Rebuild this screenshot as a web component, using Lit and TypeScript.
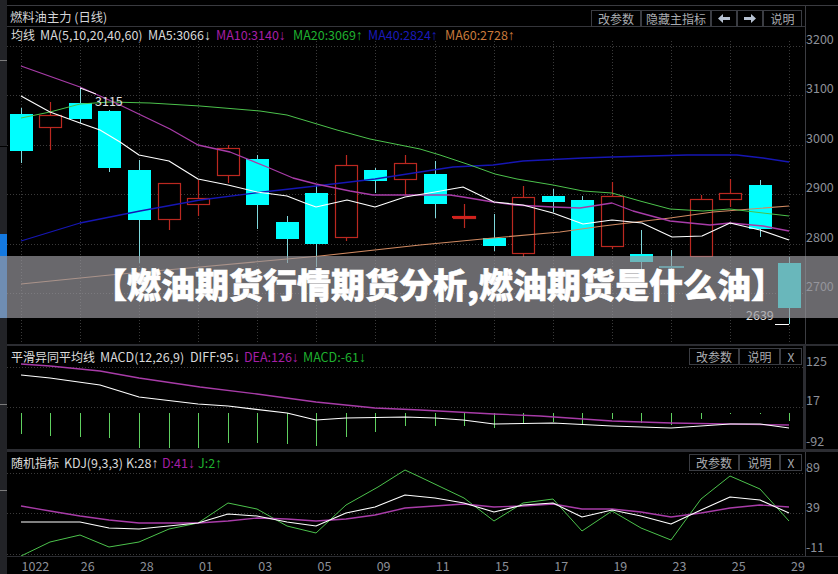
import { LitElement, html, css, svg } from "lit";
import { customElement } from "lit/decorators.js";

type Pt = [number, number];

// x centre, box top, box bottom, wick top, wick bottom, up (red hollow) or down (cyan)
const candles: [number, number, number, number, number, boolean][] = [
  [21.5, 114, 151, 108, 163, false],
  [50.5, 115, 127, 102, 150, true],
  [80.5, 103, 119, 88, 123, false],
  [109.5, 111, 168, 110, 172, false],
  [139.5, 170, 220, 160, 263, false],
  [169.5, 183, 219, 183, 230, true],
  [198.5, 198, 204, 180, 216, true],
  [228.5, 148, 175, 145, 183, true],
  [257.5, 159, 205, 155, 229, false],
  [287.5, 222, 239, 216, 263, false],
  [316.5, 193, 244, 185, 267, false],
  [346.5, 165, 237, 155, 241, true],
  [375.5, 170, 181, 168, 193, false],
  [405.5, 163, 179, 155, 195, true],
  [435.5, 174, 204, 161, 218, false],
  [464.5, 216, 218, 204, 228, true],
  [494.5, 238, 246, 214, 251, false],
  [523.5, 197, 253, 186, 257, true],
  [553.5, 196, 202, 189, 212, false],
  [582.5, 200, 256, 196, 256, false],
  [612.5, 196, 246, 182, 249, true],
  [641.5, 254, 262, 230, 278, false],
  [671.5, 266, 268, 250, 278, false],
  [701.5, 199, 256, 195, 256, true],
  [730.5, 193, 199, 179, 207, true],
  [760.5, 185, 229, 180, 237, false],
  [789.5, 263, 308, 257, 324, false],
];

const ma5: Pt[] = [[21, 96], [50, 112], [80, 123], [100, 130], [120, 142], [139, 155], [169, 161], [198, 179], [228, 185], [257, 192], [287, 196], [305, 203], [316, 207], [347, 200], [375, 207], [405, 197], [435, 192], [463, 187], [494, 202], [523, 205], [553, 213], [583, 224], [612, 220], [642, 223], [672, 237], [702, 236], [730, 223], [760, 230], [789, 240]];
const ma10: Pt[] = [[21, 66], [80, 87], [120, 105], [170, 129], [198, 145], [230, 152], [267, 167], [293, 178], [316, 184], [350, 191], [373, 195], [450, 195], [463, 197], [493, 202], [515, 205], [553, 207], [580, 208], [612, 203], [633, 211], [670, 221], [710, 225], [730, 223], [763, 226], [789, 231]];
const ma20: Pt[] = [[21, 118], [50, 112], [80, 104], [110, 102], [150, 103], [200, 106], [260, 111], [287, 115], [337, 130], [370, 139], [420, 149], [440, 155], [470, 165], [495, 174], [517, 179], [553, 185], [583, 191], [612, 193], [640, 201], [670, 209], [703, 211], [730, 209], [763, 213], [789, 216]];
const ma40: Pt[] = [[21, 241], [80, 223], [140, 211], [200, 200], [263, 192], [316, 186], [375, 179], [420, 172], [453, 167], [493, 165], [523, 161], [583, 158], [612, 157], [687, 155], [737, 155], [763, 158], [789, 162]];
const ma60: Pt[] = [[21, 284], [110, 275], [200, 267], [320, 256], [420, 245], [493, 238], [560, 232], [603, 226], [670, 218], [713, 212], [789, 206]];

const dea: Pt[] = [[21, 364], [50, 366], [100, 371], [139, 378], [200, 387], [257, 394], [316, 402], [375, 408], [420, 410], [494, 414], [540, 416], [612, 421], [671, 423], [789, 425]];
const diff: Pt[] = [[21, 375], [50, 378], [100, 385], [139, 397], [198, 404], [228, 406], [287, 413], [316, 420], [346, 418], [405, 417], [435, 418], [463, 420], [494, 424], [553, 423], [612, 426], [671, 428], [730, 424], [760, 424], [789, 428]];
const histBottoms = [434, 436, 437, 438, 448, 448, 448, 443, 443, 444, 446, 437, 432, 426, 426, 426, 428, 424, 422, 425, 419, 423, 425, 419, 414, 414, 421];

const kdjJ: Pt[] = [[21, 556], [50, 542], [80, 535], [109, 547], [139, 542], [169, 529], [198, 523], [228, 503], [257, 509], [287, 526], [316, 533], [346, 505], [378, 487], [405, 470], [420, 477], [464, 498], [494, 521], [523, 503], [553, 499], [582, 531], [612, 511], [641, 528], [671, 540], [701, 499], [730, 476], [760, 489], [789, 521]];
const kdjK: Pt[] = [[21, 522], [80, 522], [109, 528], [139, 529], [198, 523], [228, 514], [257, 516], [287, 522], [316, 526], [346, 513], [375, 507], [405, 495], [435, 498], [464, 503], [494, 512], [523, 505], [553, 503], [582, 517], [612, 510], [641, 516], [671, 524], [701, 510], [730, 497], [760, 500], [789, 513]];
const kdjD: Pt[] = [[21, 506], [50, 511], [80, 516], [109, 520], [139, 523], [198, 523], [228, 521], [257, 518], [287, 519], [316, 521], [346, 519], [375, 515], [405, 508], [464, 504], [494, 507], [523, 506], [553, 504], [582, 509], [612, 509], [641, 512], [671, 517], [701, 513], [730, 508], [760, 505], [789, 507]];

const ticks = [21.5, 80.5, 139.5, 198.5, 257.5, 316.5, 375.5, 435.5, 494.5, 553.5, 612.5, 671.5, 730.5, 789.5];
const dates = ["1022", "26", "28", "01", "03", "05", "09", "11", "15", "17", "19", "23", "25", "29"];

const pts = (p: Pt[]) => p.map(([x, y]) => `${x},${y}`).join(" ");
const line = (p: Pt[], cls: string) => svg`<polyline class=${cls} points=${pts(p)}></polyline>`;
const hgrid = (ys: number[]) => ys.map((y) => svg`<line class="grid" x1="7" x2="805" y1=${y + 0.5} y2=${y + 0.5}></line>`);
const axis = (items: [string, number][]) => items.map(([t, y]) => svg`<text class="tick" x="806" y=${y}>${t}</text>`);

const arrowLeft = html`<svg class="arr" width="12" height="9" viewBox="0 0 12 9"><path d="M0 4.5 5 0v3h7v3H5v3z"></path></svg>`;
const arrowRight = html`<svg class="arr" width="12" height="9" viewBox="0 0 12 9"><path d="M12 4.5 7 0v3H0v3h7v3z"></path></svg>`;

// one legend value: label plus the narrow trend arrow
const val = (cls: string, width: number | null, text: string, up: boolean) =>
  html`<span class=${cls} style=${width ? `width:${width}px` : ""}>${text}<b>${up ? "↑" : "↓"}</b></span>`;

@customElement("app-root")
export class AppRoot extends LitElement {
  static styles = css`
    :host {
      display: block;
      position: relative;
      width: 838px;
      height: 574px;
      overflow: hidden;
      background: #000;
      font-family: "Noto Sans CJK SC", "Noto Sans", sans-serif;
      color: #d4d5d8;
    }
    .page {
      display: flex;
      height: 574px;
    }
    .rail {
      width: 7px;
      flex: none;
      display: flex;
      flex-direction: column;
      background: #222327;
    }
    .rail i {
      display: block;
      flex: none;
    }
    .rail .blue {
      background: #1479e0;
    }
    .rail .mark {
      height: 1px;
      background: #7c7c7c;
    }
    .rail .dark {
      height: 1px;
      background: #000;
    }
    .main {
      flex: 1;
      min-width: 0;
      display: flex;
      flex-direction: column;
    }
    .top {
      height: 5px;
      flex: none;
    }
    .sep {
      flex: none;
      background: #2c2d32;
    }
    .sep.first {
      height: 1px;
      background: #3a3b40;
    }
    .title-row {
      box-sizing: border-box;
      width: 799px;
      height: 21px;
      flex: none;
      display: flex;
      justify-content: space-between;
      padding: 0 3px;
      border-bottom: 1px solid #34353a;
      border-right: 1px solid #3c3d42;
      font-size: 12.3px;
      line-height: 22px;
    }
    .title-row .btns {
      align-self: flex-end;
      margin: 0 0 -1px;
    }
    .legend {
      display: flex;
      align-items: center;
      padding: 1px 0 0 4px;
      box-sizing: border-box;
      font-size: 12.5px;
      white-space: nowrap;
      flex: none;
    }
    .main-legend {
      width: 799px;
      height: 14px;
      border-right: 1px solid #3c3d42;
    }
    .legend span {
      display: inline-block;
    }
    .legend b {
      font-family: "Liberation Sans", sans-serif;
      font-weight: 400;
      font-size: 14px;
      line-height: 14px;
    }
    .legend .name {
      color: #dcdcdc;
      font-size: 12px;
    }
    .white {
      color: #d8d8d8;
    }
    .pink {
      color: #a51fa5;
    }
    .green {
      color: #1fb02f;
    }
    .navy {
      color: #1a1ab8;
    }
    .orange {
      color: #c87a3c;
    }
    .panel-head {
      box-sizing: border-box;
      width: 799px;
      flex: none;
      display: flex;
      align-items: center;
      justify-content: space-between;
    }
    .macd-head {
      height: 19px;
      padding-right: 1px;
      border-right: 3px solid #2c2d32;
    }
    .kdj-head {
      height: 20px;
      padding-right: 3px;
      border-right: 1px solid #3c3d42;
    }
    .btns {
      display: flex;
      height: 17px;
      border: 1px solid #3a3c42;
      box-sizing: border-box;
      margin-top: 1px;
      font-size: 12px;
      color: #a9abb0;
      line-height: 15px;
    }
    .btns span {
      box-sizing: border-box;
      display: flex;
      align-items: center;
      justify-content: center;
      border-left: 2px solid #3a3c42;
    }
    .btns span:first-child {
      border-left: 0;
    }
    .arr {
      fill: #b7c2d2;
    }
    svg {
      display: block;
      flex: none;
      overflow: visible;
    }
    .grid {
      stroke: #3a3a3a;
      stroke-width: 1;
      stroke-dasharray: 1 2;
    }
    .axis {
      stroke: #3c3d42;
      stroke-width: 1;
    }
    .tick {
      fill: #8d9099;
      font-size: 12.5px;
    }
    .ma {
      fill: none;
      stroke-width: 1.1;
      stroke-linejoin: round;
    }
    .w {
      stroke: #fff;
    }
    .m {
      stroke: #a83ca8;
      stroke-width: 1.3;
    }
    .g {
      stroke: #4cc24c;
      stroke-width: 1;
    }
    .b {
      stroke: #1616b4;
      stroke-width: 1.3;
    }
    .o {
      stroke: #d08a62;
    }
    .up {
      fill: #000;
      stroke: #bb2820;
      stroke-width: 1.2;
    }
    .up-w {
      stroke: #bb2820;
      stroke-width: 1.2;
    }
    .dn {
      fill: #00ffff;
    }
    .dn-w {
      stroke: #7fd8dc;
      stroke-width: 1;
    }
    .hist {
      stroke: #5fd05f;
      stroke-width: 1;
    }
    .low {
      fill: #e0e0e0;
      font-size: 12.5px;
    }
    .dates {
      flex: 1;
      display: grid;
      grid-template-columns: repeat(14, 59.2px);
      padding-left: 14.5px;
      font-size: 12.5px;
      line-height: 17px;
      color: #8d9099;
    }
    .banner {
      position: absolute;
      left: 0;
      right: 0;
      top: 256px;
      height: 62px;
      box-sizing: border-box;
      padding: 0 0 7px 40px;
      display: flex;
      align-items: center;
      justify-content: center;
      background: rgba(152, 151, 156, 0.69);
      color: #fff;
      font-size: 34px;
      font-weight: 900;
      -webkit-text-stroke: 0.6px #fff;
      white-space: nowrap;
    }
  `;

  private buttons(items: [unknown, number][]) {
    return html`<div class="btns">
      ${items.map(([t, w]) => html`<span style="width:${w}px">${t}</span>`)}
    </div>`;
  }

  private mainChart() {
    const vs = ticks.map((x) => svg`<line class="grid" x1=${x} x2=${x} y1="41" y2="344"></line>`);
    const body = candles.map(([x, top, bot, wt, wb, up]) =>
      up
        ? svg`<line class="up-w" x1=${x} x2=${x} y1=${wt} y2=${wb}></line>
            <rect class="up" x=${x - 11} y=${top + 0.5} width="22" height=${bot - top}></rect>`
        : svg`<line class="dn-w" x1=${x} x2=${x} y1=${wt} y2=${wb}></line>
            <rect class="dn" x=${x - 11.5} y=${top} width="23" height=${bot - top}></rect>`
    );
    return html`<svg width="831" height="303" viewBox="7 41 831 303">
      ${hgrid([46, 95, 145, 194, 244, 293])} ${vs}
      <line class="axis" x1="805.5" x2="805.5" y1="41" y2="344"></line>
      ${body}
      <rect x="452" y="216" width="24" height="2" fill="#d4201c"></rect>
      <rect x="659" y="266" width="25" height="2" fill="#20b8c0"></rect>
      ${line(ma60, "ma o")} ${line(ma40, "ma b")} ${line(ma20, "ma g")} ${line(ma10, "ma m")} ${line(ma5, "ma w")}
      <line x1="80" y1="88" x2="96" y2="94" stroke="#fff"></line>
      <text class="low" x="95" y="106">3115</text>
      <text class="low" x="746" y="320">2639</text>
      <line x1="775" x2="789" y1="324.5" y2="324.5" stroke="#fff"></line>
      ${axis([["3200", 44], ["3100", 93], ["3000", 143], ["2900", 192], ["2800", 242], ["2700", 291]])}
    </svg>`;
  }

  private macdChart() {
    const bars = histBottoms.map((b, i) => {
      const x = candles[i][0];
      return svg`<line class="hist" x1=${x} x2=${x} y1="413" y2=${b}></line>`;
    });
    return html`<svg width="831" height="84" viewBox="7 365 831 84">
      ${hgrid([367, 407])}
      <rect x="803" y="365" width="3" height="84" fill="#2c2d32"></rect>
      ${bars} ${line(dea, "ma m")} ${line(diff, "ma w")}
      ${axis([["125", 366], ["17", 405], ["-92", 446]])}
    </svg>`;
  }

  private kdjChart() {
    return html`<svg width="831" height="84" viewBox="7 472 831 84">
      ${hgrid([473, 513, 554])}
      <line class="axis" x1="805.5" x2="805.5" y1="472" y2="556"></line>
      ${line(kdjJ, "ma g")} ${line(kdjD, "ma m")} ${line(kdjK, "ma w")}
      ${axis([["89", 472], ["39", 512], ["-11", 552]])}
    </svg>`;
  }

  render() {
    return html`<div class="page">
        <div class="rail">
          <i style="height:60px"></i>
          <i class="mark"></i>
          <i style="height:85px"></i>
          <i class="dark"></i>
          <i style="height:87px"></i>
          <i class="blue" style="height:84px"></i>
          <i style="height:86px"></i>
          <i class="mark"></i>
          <i style="height:85px"></i>
          <i class="mark"></i>
        </div>
        <div class="main">
          <div class="top"></div>
          <div class="sep first"></div>
          <div class="title-row">
            <span>燃料油主力 (日线)</span>
            ${this.buttons([["改参数", 48], ["隐藏主指标", 70], [arrowLeft, 26], [arrowRight, 26], ["说明", 39]])}
          </div>
          <div class="legend main-legend">
            <span class="name" style="width:29px">均线</span>
            <span class="white" style="width:108px">MA(5,10,20,40,60)</span>
            ${val("white", 68, "MA5:3066", false)}
            ${val("pink", 77, "MA10:3140", false)}
            ${val("green", 75, "MA20:3069", true)}
            ${val("navy", 77, "MA40:2824", true)}
            ${val("orange", null, "MA60:2728", true)}
          </div>
          ${this.mainChart()}
          <div class="sep" style="height:2px"></div>
          <div class="panel-head macd-head">
            <div class="legend">
              <span class="name" style="width:89px">平滑异同平均线</span>
              <span class="white" style="width:90px">MACD(12,26,9)</span>
              ${val("white", 54, "DIFF:95", false)}
              ${val("pink", 59, "DEA:126", false)}
              ${val("green", null, "MACD:-61", false)}
            </div>
            ${this.buttons([["改参数", 48], ["说明", 41], ["X", 22]])}
          </div>
          ${this.macdChart()}
          <div class="sep" style="height:3px"></div>
          <div class="panel-head kdj-head">
            <div class="legend">
              <span class="name" style="width:53px">随机指标</span>
              <span class="white" style="width:62px">KDJ(9,3,3)</span>
              ${val("white", 36, "K:28", true)}
              ${val("pink", 36, "D:41", false)}
              ${val("green", null, "J:2", true)}
            </div>
            ${this.buttons([["改参数", 48], ["说明", 41], ["X", 22]])}
          </div>
          ${this.kdjChart()}
          <div class="sep" style="height:1px"></div>
          <div class="dates">${dates.map((d) => html`<span>${d}</span>`)}</div>
        </div>
      </div>
      <div class="banner">【燃油期货行情期货分析,燃油期货是什么油】</div>`;
  }
}
